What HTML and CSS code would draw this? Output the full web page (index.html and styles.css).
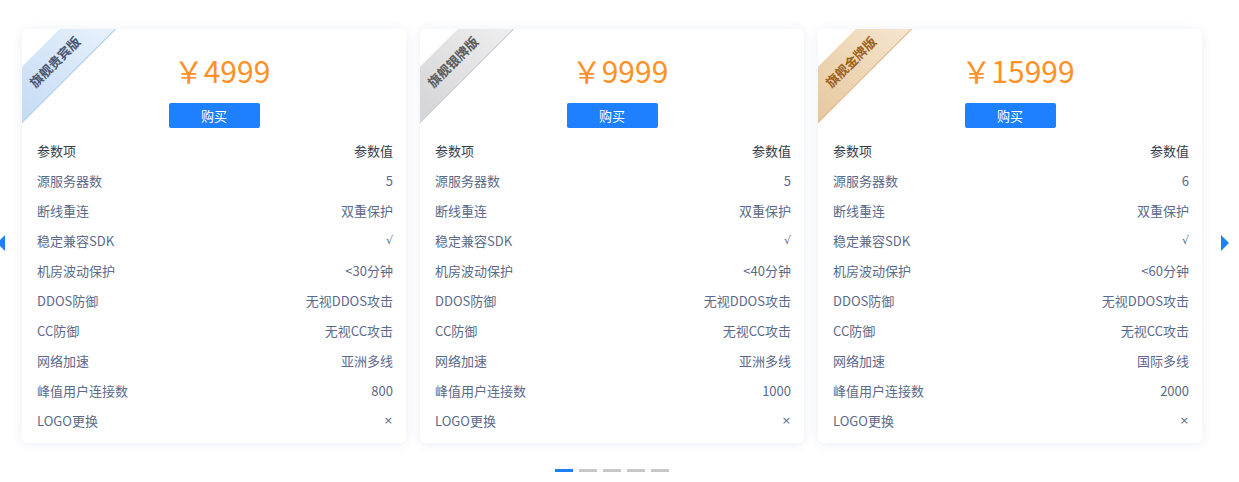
FILE: index.html
```html
<!DOCTYPE html>
<html lang="zh-CN">
<head>
  <meta charset="UTF-8">
  <meta name="viewport" content="width=device-width, initial-scale=1.0">
  <title>套餐价格</title>
  <link rel="stylesheet" href="styles.css">
</head>
<body>
  <div class="slider">
    <span class="arrow arrow-left"></span>
    <span class="arrow arrow-right"></span>
    <div class="cards">
      <div class="card">
        <div class="ribbon ribbon-blue">旗舰贵宾版</div>
        <div class="price">￥4999</div>
        <div class="buy"><button>购买</button></div>
        <div class="rows">
          <div class="row head"><span>参数项</span><span>参数值</span></div>
          <div class="row"><span>源服务器数</span><span>5</span></div>
          <div class="row"><span>断线重连</span><span>双重保护</span></div>
          <div class="row"><span>稳定兼容SDK</span><span class="sym">√</span></div>
          <div class="row"><span>机房波动保护</span><span>&lt;30分钟</span></div>
          <div class="row"><span>DDOS防御</span><span>无视DDOS攻击</span></div>
          <div class="row"><span>CC防御</span><span>无视CC攻击</span></div>
          <div class="row"><span>网络加速</span><span>亚洲多线</span></div>
          <div class="row"><span>峰值用户连接数</span><span>800</span></div>
          <div class="row"><span>LOGO更换</span><span class="sym">×</span></div>
        </div>
      </div>
      <div class="card">
        <div class="ribbon ribbon-silver">旗舰银牌版</div>
        <div class="price">￥9999</div>
        <div class="buy"><button>购买</button></div>
        <div class="rows">
          <div class="row head"><span>参数项</span><span>参数值</span></div>
          <div class="row"><span>源服务器数</span><span>5</span></div>
          <div class="row"><span>断线重连</span><span>双重保护</span></div>
          <div class="row"><span>稳定兼容SDK</span><span class="sym">√</span></div>
          <div class="row"><span>机房波动保护</span><span>&lt;40分钟</span></div>
          <div class="row"><span>DDOS防御</span><span>无视DDOS攻击</span></div>
          <div class="row"><span>CC防御</span><span>无视CC攻击</span></div>
          <div class="row"><span>网络加速</span><span>亚洲多线</span></div>
          <div class="row"><span>峰值用户连接数</span><span>1000</span></div>
          <div class="row"><span>LOGO更换</span><span class="sym">×</span></div>
        </div>
      </div>
      <div class="card">
        <div class="ribbon ribbon-gold">旗舰金牌版</div>
        <div class="price">￥15999</div>
        <div class="buy"><button>购买</button></div>
        <div class="rows">
          <div class="row head"><span>参数项</span><span>参数值</span></div>
          <div class="row"><span>源服务器数</span><span>6</span></div>
          <div class="row"><span>断线重连</span><span>双重保护</span></div>
          <div class="row"><span>稳定兼容SDK</span><span class="sym">√</span></div>
          <div class="row"><span>机房波动保护</span><span>&lt;60分钟</span></div>
          <div class="row"><span>DDOS防御</span><span>无视DDOS攻击</span></div>
          <div class="row"><span>CC防御</span><span>无视CC攻击</span></div>
          <div class="row"><span>网络加速</span><span>国际多线</span></div>
          <div class="row"><span>峰值用户连接数</span><span>2000</span></div>
          <div class="row"><span>LOGO更换</span><span class="sym">×</span></div>
        </div>
      </div>
    </div>
    <div class="dots">
      <span class="dot active"></span>
      <span class="dot"></span>
      <span class="dot"></span>
      <span class="dot"></span>
      <span class="dot"></span>
    </div>
  </div>
</body>
</html>
```

FILE: styles.css
```css
body { margin: 0; padding: 0; background: #fff; font-family: "Noto Sans CJK SC", "Noto Sans", sans-serif; }
.slider { position: relative; width: 1239px; height: 482px; padding: 29px 0 0 22px; box-sizing: border-box; }
.cards { display: flex; gap: 14px; }
.card { position: relative; overflow: hidden; width: 384px; height: 414px; box-sizing: border-box; background: #fff; border-radius: 6px; box-shadow: 0 1px 12px rgba(40, 70, 140, 0.09); padding-top: 21px; }
.ribbon { position: absolute; left: -42px; top: 13px; width: 150px; height: 39px; line-height: 39px; text-align: center; transform: rotate(-45deg); font-size: 13px; font-weight: bold; }
.ribbon-blue { background: linear-gradient(90deg, #c3daf3, #eaf3fc); color: #4a5672; border-bottom: 1px solid #a9c7ea; }
.ribbon-silver { background: linear-gradient(90deg, #d2d2d4, #f1f1f2); color: #5a5a5a; border-bottom: 1px solid #c2c6ce; }
.ribbon-gold { background: linear-gradient(90deg, #e6c699, #f6e8d4); color: #9b6220; border-bottom: 1px solid #d8ae78; }
.price { text-align: center; height: 40px; line-height: 40px; font-size: 30px; color: #ff9126; padding-left: 16px; }
.buy { text-align: center; margin-top: 12px; }
.buy button { width: 91px; height: 25px; border: none; border-radius: 2px; background: #1e80ff; color: #fff; font-family: inherit; font-size: 13px; padding: 0; cursor: pointer; }
.rows { margin-top: 8px; padding: 0 13px 0 15px; }
.row { display: flex; justify-content: space-between; height: 30px; line-height: 30px; font-size: 13px; color: #5c6a8a; }
.row.head { color: #343c4c; }
.row .sym { font-family: "DejaVu Sans", sans-serif; font-size: 11px; }
.arrow { position: absolute; top: 235px; width: 0; height: 0; border-top: 8px solid transparent; border-bottom: 8px solid transparent; }
.arrow-left { left: -3px; border-right: 8px solid #1e80ff; }
.arrow-right { left: 1221px; border-left: 8px solid #1e80ff; }
.dots { display: flex; justify-content: center; gap: 6px; width: 1180px; margin-top: 26px; }
.dot { width: 18px; height: 3px; background: #c8c8c8; }
.dot.active { background: #1e80ff; }
```
